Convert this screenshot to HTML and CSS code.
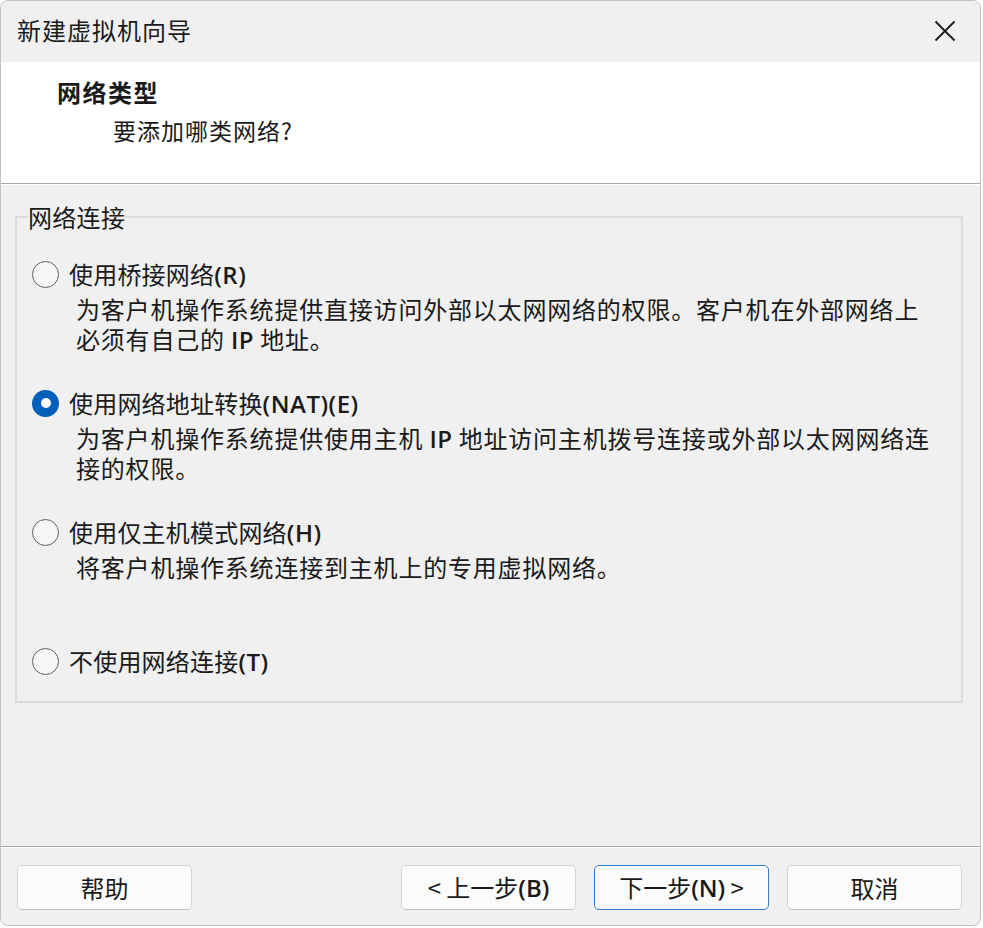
FILE: index.html
```html
<!DOCTYPE html>
<html lang="zh-CN">
<head>
<meta charset="utf-8">
<title>新建虚拟机向导</title>
<link rel="stylesheet" href="styles.css">
</head>
<body>
<div class="window">
  <div class="titlebar">
    <span class="title">新建虚拟机向导</span>
    <span class="close" aria-label="关闭">
      <svg width="22" height="22" viewBox="0 0 22 22"><path d="M1.5 1.5 L20.5 20.5 M20.5 1.5 L1.5 20.5" stroke="#1b1b1b" stroke-width="1.8" fill="none"/></svg>
    </span>
  </div>
  <div class="header">
    <div class="h-title">网络类型</div>
    <div class="h-sub">要添加哪类网络?</div>
  </div>
  <div class="main">
    <fieldset class="group">
      <legend>网络连接</legend>
      <div class="option">
        <div class="opt-row"><span class="radio"></span><span class="opt-label">使用桥接网络<span class="lat">(R)</span></span></div>
        <div class="opt-desc">
          <div class="line">为客户机操作系统提供直接访问外部以太网网络的权限。客户机在外部网络上</div>
          <div class="line">必须有自己的 <span class="lat">IP</span> 地址。</div>
        </div>
      </div>
      <div class="option">
        <div class="opt-row"><span class="radio checked"></span><span class="opt-label">使用网络地址转换<span class="lat">(NAT)(E)</span></span></div>
        <div class="opt-desc">
          <div class="line">为客户机操作系统提供使用主机 <span class="lat">IP</span> 地址访问主机拨号连接或外部以太网网络连</div>
          <div class="line">接的权限。</div>
        </div>
      </div>
      <div class="option">
        <div class="opt-row"><span class="radio"></span><span class="opt-label">使用仅主机模式网络<span class="lat">(H)</span></span></div>
        <div class="opt-desc">
          <div class="line">将客户机操作系统连接到主机上的专用虚拟网络。</div>
        </div>
      </div>
      <div class="option last">
        <div class="opt-row"><span class="radio"></span><span class="opt-label">不使用网络连接<span class="lat">(T)</span></span></div>
      </div>
    </fieldset>
  </div>
  <div class="footer">
    <button class="btn">帮助</button>
    <div class="btn-group">
      <button class="btn">&lt; 上一步<span class="lat">(B)</span></button>
      <button class="btn primary">下一步<span class="lat">(N)</span> &gt;</button>
      <button class="btn">取消</button>
    </div>
  </div>
</div>
</body>
</html>
```
FILE: styles.css
```css
* { box-sizing: border-box; }
html, body { margin: 0; padding: 0; }
body {
  background: #ffffff;
  font-family: "Noto Sans CJK SC", "Noto Sans", sans-serif;
  color: #1a1a1a;
  width: 983px;
  height: 928px;
  overflow: hidden;
}
.window {
  width: 981px;
  height: 926px;
  border: 1px solid #c2c2c2;
  border-radius: 8px;
  background: #f0f0f0;
  overflow: hidden;
  display: flex;
  flex-direction: column;
}
.titlebar {
  height: 61px;
  flex: none;
  display: flex;
  align-items: center;
  justify-content: space-between;
  padding: 0 24px 3px 16px;
  background: #f0f0f0;
}
.title {
  font-size: 24px;
  letter-spacing: 1px;
  line-height: 30px;
}
.close { display: flex; width: 22px; height: 22px; margin-top: 2px; }
.header {
  height: 122px;
  flex: none;
  background: #ffffff;
  border-bottom: 1px solid #a6a6a6;
  padding: 15px 0 0 56px;
}
.h-title {
  font-size: 24px;
  font-weight: bold;
  letter-spacing: 1.5px;
  line-height: 30px;
}
.h-sub {
  margin-top: 8px;
  margin-left: 56px;
  font-size: 23px;
  letter-spacing: 1px;
  line-height: 30px;
}
.main {
  flex: 1;
  border-top: 1px solid #ffffff;
  padding: 17px 17px 0 14px;
}
.group {
  margin: 0;
  border: 2px solid #dcdcdc;
  padding: 27px 10px 25px 11px;
}
.group legend {
  font-size: 24px;
  line-height: 30px;
  padding: 0;
  letter-spacing: 0.3px;
}
.option { margin-bottom: 34px; margin-left: 4px; }
.option.last { margin-bottom: 0; }
.opt-row {
  display: flex;
  align-items: center;
  height: 30px;
}
.radio {
  width: 27px;
  height: 27px;
  border-radius: 50%;
  border: 1.5px solid #5f5f5f;
  background: #f6f6f6;
  flex: none;
  margin-right: 10px;
  display: flex;
  align-items: center;
  justify-content: center;
}
.radio.checked {
  border: none;
  background: #005fb8;
}
.radio.checked::after {
  content: "";
  width: 10px;
  height: 10px;
  border-radius: 50%;
  background: #ffffff;
}
.opt-label {
  font-size: 24px;
  line-height: 30px;
  letter-spacing: 0.2px;
}
.lat {
  font-family: "Open Sans", "Noto Sans", sans-serif;
  font-weight: 600;
  letter-spacing: 0.5px;
}
.opt-desc {
  margin-top: 5px;
  margin-left: 44px;
  min-height: 60px;
  font-size: 24px;
  letter-spacing: 0.8px;
  white-space: nowrap;
}
.line {
  height: 30px;
  line-height: 30px;
}
.footer {
  flex: none;
  border-top: 1px solid #a6a6a6;
  box-shadow: inset 0 1px 0 #ffffff;
  padding: 18px 18px 15px 16px;
  display: flex;
  justify-content: space-between;
}
.btn-group { display: flex; gap: 18px; }
.btn {
  width: 175px;
  height: 45px;
  background: #fbfbfb;
  border: 1px solid #d3d3d3;
  border-bottom-color: #c0c0c0;
  border-radius: 5px;
  font-family: "Noto Sans CJK SC", "Noto Sans", sans-serif;
  font-size: 24px;
  color: #1a1a1a;
  padding: 0;
  line-height: 30px;
}
.btn .lat { font-weight: 600; letter-spacing: 0; }
.btn.primary {
  border: 1px solid #2f7fcf;
}
```
